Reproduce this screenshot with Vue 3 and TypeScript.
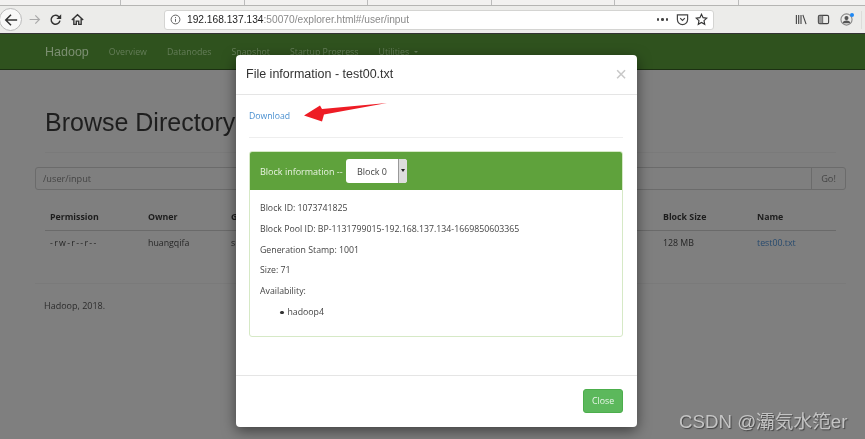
<script setup lang="ts">
const navLinks = ['Overview', 'Datanodes', 'Snapshot', 'Startup Progress']
const blockRows = [
  'Block ID: 1073741825',
  'Block Pool ID: BP-1131799015-192.168.137.134-1669850603365',
  'Generation Stamp: 1001',
  'Size: 71',
  'Availability:',
]
</script>

<template>
  <div class="screen">
    <div class="tabstrip">
      <span class="tab"></span>
      <span class="tab"></span>
      <span class="tab"></span>
      <span class="tab"></span>
      <span class="tab"></span>
      <span class="tab"></span>
    </div>

    <div class="toolbar">
      <div class="nav-buttons">
        <span class="back">
          <svg width="14" height="14" viewBox="0 0 16 16" fill="none" stroke="#333" stroke-width="1.7">
            <path d="M15 8H2M8 2L2 8l6 6" />
          </svg>
        </span>
        <svg width="13" height="13" viewBox="0 0 16 16" fill="none" stroke="#aaa" stroke-width="1.5">
          <path d="M2 8h12M9 3l5 5-5 5" />
        </svg>
        <svg class="reload" width="13" height="13" viewBox="0 0 16 16" fill="none" stroke="#333" stroke-width="1.8">
          <path d="M13.500 9.500A5.500 5.500 0 1 1 11.500 4L13.500 6" />
          <path d="M15 1.500v6H9z" fill="#333" stroke="none" />
        </svg>
        <svg class="home" width="13" height="13" viewBox="0 0 16 16" fill="none" stroke="#333" stroke-width="1.700">
          <path d="M1 8.500L8 2l7 6.500M3.500 7v7h3v-4h3v4h3V7" />
        </svg>
      </div>

      <div class="urlbar">
        <svg width="11" height="11" viewBox="0 0 12 12" fill="none" stroke="#555" stroke-width="1">
          <circle cx="6" cy="6" r="4.800" />
          <path d="M6 5.300v3.200M6 3.300v1" />
        </svg>
        <span class="url"><b>192.168.137.134</b>:50070/explorer.html#/user/input</span>
        <span class="url-dots"><i></i><i></i><i></i></span>
        <svg width="13" height="13" viewBox="0 0 14 14" fill="none" stroke="#444" stroke-width="1.300">
          <path d="M1.500 2h11v5a5.500 5.500 0 0 1-11 0zM4.500 5.500L7 8l2.500-2.500" />
        </svg>
        <svg class="star" width="13" height="13" viewBox="0 0 14 14" fill="none" stroke="#333" stroke-width="1.200">
          <path d="M7 1.300l1.700 3.700 4 .5-3 2.700.8 4L7 10.200l-3.500 2 .8-4-3-2.700 4-.5z" />
        </svg>
      </div>

      <div class="tools">
        <svg width="12" height="13" viewBox="0 0 13 14" fill="none" stroke="#444" stroke-width="1.200">
          <path d="M1.500 2v10M4 2v10M6.500 2v10M8.500 2l3.500 10" />
        </svg>
        <svg width="13" height="13" viewBox="0 0 14 14" fill="none" stroke="#444" stroke-width="1.200">
          <rect x="1.500" y="2.500" width="11" height="9" rx="1.500" />
          <path d="M6 2.500v9" />
          <path d="M2 3h4v8H2z" fill="#999" stroke="none" />
        </svg>
        <span class="account">
          <svg width="13" height="13" viewBox="0 0 14 14">
            <circle cx="7" cy="7" r="6" fill="none" stroke="#888" stroke-width="1.200" />
            <circle cx="7" cy="5.500" r="2.200" fill="#555" />
            <path d="M3 11a4 3 0 0 1 8 0z" fill="#555" />
          </svg>
          <i class="dot"></i>
        </span>
        <span class="tool-sep"></span>
      </div>
    </div>

    <div class="page">
      <nav class="navbar">
        <span class="brand">Hadoop</span>
        <ul class="links">
          <li v-for="link in navLinks" :key="link">{{ link }}</li>
          <li>Utilities <i class="caret"></i></li>
        </ul>
      </nav>

      <main class="content">
        <h1>Browse Directory</h1>
        <hr class="rule" />
        <div class="path-group">
          <span class="path">/user/input</span>
          <span class="go">Go!</span>
        </div>
        <div class="table">
          <div class="row head">
            <span>Permission</span>
            <span>Owner</span>
            <span>Group</span>
            <span></span>
            <span>Block Size</span>
            <span>Name</span>
          </div>
          <div class="row">
            <span class="perm">-rw-r--r--</span>
            <span>huangqifa</span>
            <span>supergroup</span>
            <span></span>
            <span>128 MB</span>
            <span class="file">test00.txt</span>
          </div>
        </div>
        <hr class="foot-rule" />
        <p class="foot">Hadoop, 2018.</p>
      </main>

      <div class="modal">
        <header class="modal-head">
          <span class="modal-title">File information - test00.txt</span>
          <span class="close-x">×</span>
        </header>
        <div class="modal-body">
          <a class="download">Download</a>
          <hr class="inner-rule" />
          <section class="panel">
            <div class="panel-head">
              <span class="panel-label">Block information --</span>
              <span class="select">
                <span class="select-label">Block 0</span>
                <span class="select-arrow"></span>
              </span>
            </div>
            <div class="panel-body">
              <p v-for="row in blockRows" :key="row">{{ row }}</p>
              <ul>
                <li>hadoop4</li>
              </ul>
            </div>
          </section>
        </div>
        <footer class="modal-foot">
          <button class="close-btn">Close</button>
        </footer>

        <svg class="arrow" width="84" height="20" viewBox="0 0 84 20">
          <path d="M0 12.500L16 2.500l2 3.500L83 0 20 11.500 18 18.500z" fill="#ee1c25" />
        </svg>
      </div>

      <span class="watermark">CSDN @灞気水笵er</span>
    </div>
  </div>
</template>

<style scoped>
.screen {
  width: 865px;
  height: 439px;
  overflow: hidden;
  display: flex;
  flex-direction: column;
  font-family: "Open Sans", sans-serif;
  font-variant-ligatures: none;
  background: #7f7f7f;
  filter: blur(0.3px);
}

.tabstrip {
  height: 5px;
  display: flex;
  padding-left: 120px;
  background: #f2f1f0;
  border-bottom: 1px solid #b5b5b3;
}
.tab {
  width: 123.600px;
  border-left: 1px solid #bbb;
  box-sizing: border-box;
}

.toolbar {
  height: 27px;
  display: flex;
  align-items: center;
  background: #ececea;
  border-bottom: 1px solid #333;
}
.nav-buttons {
  width: 164px;
  display: flex;
  align-items: center;
  flex-shrink: 0;
}
.back {
  width: 21px;
  height: 21px;
  margin-left: -1px;
  margin-right: 6px;
  display: flex;
  align-items: center;
  justify-content: center;
  background: #f8f8f8;
  border: 1px solid #bbb;
  border-radius: 50%;
}
.reload {
  margin-left: 8px;
}
.home {
  margin-left: 9px;
}
.urlbar {
  width: 550px;
  height: 20px;
  box-sizing: border-box;
  padding: 0 5px;
  display: flex;
  align-items: center;
  gap: 6px;
  background: #fff;
  border: 1px solid #d4d4d2;
  border-radius: 3px;
}
.url {
  flex: 1;
  font-family: "Liberation Sans", sans-serif;
  font-size: 10.200px;
  color: #8a8a8a;
}
.url b {
  font-weight: 400;
  color: #222;
}
.url-dots {
  display: flex;
  gap: 2px;
  margin-right: 2px;
}
.url-dots i {
  width: 2.500px;
  height: 2.500px;
  border-radius: 50%;
  background: #444;
}
.tools {
  display: flex;
  align-items: center;
  gap: 10px;
  margin-left: 81px;
}
.account {
  position: relative;
  display: flex;
}
.dot {
  position: absolute;
  top: 0;
  right: -1px;
  width: 4px;
  height: 4px;
  background: #1e88f5;
  border-radius: 50%;
}
.tool-sep {
  width: 1px;
  height: 18px;
  margin-left: -2px;
  background: #dcdcda;
}

.page {
  position: relative;
  flex: 1;
  background: #7f7f7f;
}

.navbar {
  height: 35px;
  padding-left: 45px;
  display: flex;
  align-items: center;
  background: #2f521e;
  border-bottom: 1px solid #1c3012;
}
.brand {
  font-family: "Liberation Sans", sans-serif;
  font-size: 12.500px;
  color: #7c8f72;
  margin-right: 20px;
}
.links {
  display: flex;
  gap: 20px;
  margin: 0;
  padding: 0;
  list-style: none;
  font-size: 8.800px;
  color: #647d58;
}
.caret {
  display: inline-block;
  margin-left: 3px;
  vertical-align: middle;
  border-top: 2px solid #647d58;
  border-left: 2px solid transparent;
  border-right: 2px solid transparent;
}

.content {
  padding: 37px 19px 0 35px;
}
h1 {
  margin: 0 0 0 10px;
  font-family: "Liberation Sans", sans-serif;
  font-size: 25px;
  line-height: 30px;
  font-weight: 400;
  color: #1e1e1e;
}
.rule {
  height: 1px;
  margin: 15px 10px 14px;
  border: 0;
  background: #7a7a7a;
}
.path-group {
  height: 23px;
  box-sizing: border-box;
  display: flex;
  align-items: center;
  justify-content: space-between;
  border: 1px solid #6b6b6b;
  border-radius: 3px;
  font-size: 9.200px;
  color: #444;
}
.path {
  padding-left: 7px;
}
.go {
  width: 34px;
  height: 100%;
  box-sizing: border-box;
  display: flex;
  align-items: center;
  justify-content: center;
  border-left: 1px solid #6b6b6b;
}
.table {
  margin: 13px 10px 0;
  font-size: 8.800px;
  color: #262626;
}
.row {
  display: grid;
  grid-template-columns: 98px 83px 125px 307px 94px 1fr;
  padding: 0 5px;
  height: 24px;
  align-items: center;
}
.head {
  font-weight: 700;
  height: 27px;
  color: #1d1d1d;
  border-bottom: 1px solid #6a6a6a;
}
.perm {
  letter-spacing: 1.300px;
}
.file {
  color: #274a6e;
}
.foot-rule {
  height: 1px;
  margin: 28px 0 0;
  border: 0;
  background: #7a7a7a;
}
.foot {
  margin: 15px 0 0 9px;
  font-size: 9px;
  color: #2c2c2c;
}

.modal {
  position: absolute;
  left: 236px;
  top: 21px;
  width: 401px;
  height: 372px;
  display: flex;
  flex-direction: column;
  background: #fff;
  border-radius: 4px;
  box-shadow: 0 4px 14px rgba(0, 0, 0, 0.5);
}
.modal-head {
  height: 40px;
  padding: 0 10px 2px 10px;
  box-sizing: border-box;
  display: flex;
  align-items: center;
  justify-content: space-between;
  border-bottom: 1px solid #e5e5e5;
}
.modal-title {
  font-family: "Liberation Sans", sans-serif;
  font-size: 12.500px;
  color: #333;
}
.close-x {
  font-family: "Liberation Sans", sans-serif;
  font-size: 20px;
  line-height: 20px;
  color: #c8c8c8;
}
.modal-body {
  flex: 1;
  padding: 15px 14px 0 13px;
}
.download {
  display: block;
  font-size: 8.700px;
  line-height: 12px;
  color: #4a90d0;
}
.inner-rule {
  height: 1px;
  margin: 15px 0 13px;
  border: 0;
  background: #eee;
}
.panel {
  border: 1px solid #d6e9c6;
  border-radius: 3px;
  overflow: hidden;
}
.panel-head {
  height: 38px;
  padding: 0 9px 0 10px;
  display: flex;
  align-items: center;
  background: #5fa23c;
  font-size: 9px;
  color: #e9f3e2;
}
.panel-label {
  width: 86px;
}
.select {
  width: 61px;
  height: 24px;
  display: flex;
  align-items: center;
  background: #fff;
  border-radius: 3px;
  color: #444;
  overflow: hidden;
}
.select-label {
  flex: 1;
  text-align: center;
}
.select-arrow {
  width: 8px;
  height: 100%;
  position: relative;
  background: #ddd;
  border-left: 1px solid #999;
}
.select-arrow::after {
  content: "";
  position: absolute;
  left: 2px;
  top: 10px;
  border-top: 3px solid #222;
  border-left: 2px solid transparent;
  border-right: 2px solid transparent;
}
.panel-body {
  height: 146px;
  box-sizing: border-box;
  padding: 13px 10px 0;
  font-size: 8.750px;
  color: #444;
}
.panel-body p {
  margin: 0 0 9.800px;
  line-height: 11px;
}
.panel-body ul {
  margin: 0;
  padding-left: 28px;
  list-style: none;
  line-height: 11px;
}
.panel-body li {
  display: flex;
  align-items: center;
  gap: 4px;
}
.panel-body li::before {
  content: "";
  width: 3.500px;
  height: 3.500px;
  margin-left: -8px;
  border-radius: 50%;
  background: #333;
}
.modal-foot {
  height: 52px;
  padding: 0 14px 2px 0;
  box-sizing: border-box;
  display: flex;
  align-items: center;
  justify-content: flex-end;
  border-top: 1px solid #e5e5e5;
}
.close-btn {
  width: 40px;
  height: 24px;
  padding: 0;
  font-family: "Open Sans", sans-serif;
  font-size: 8.800px;
  color: #e9f6e9;
  background: #5cb85c;
  border: 1px solid #4cae4c;
  border-radius: 3px;
}
.arrow {
  position: absolute;
  left: 68px;
  top: 48px;
}
.watermark {
  position: absolute;
  left: 679px;
  top: 372px;
  font-family: "Liberation Sans", "Noto Sans CJK JP", sans-serif;
  font-size: 18.700px;
  color: #c4c4c4;
  text-shadow: 1px 1px 1px #444;
  white-space: nowrap;
}
</style>
